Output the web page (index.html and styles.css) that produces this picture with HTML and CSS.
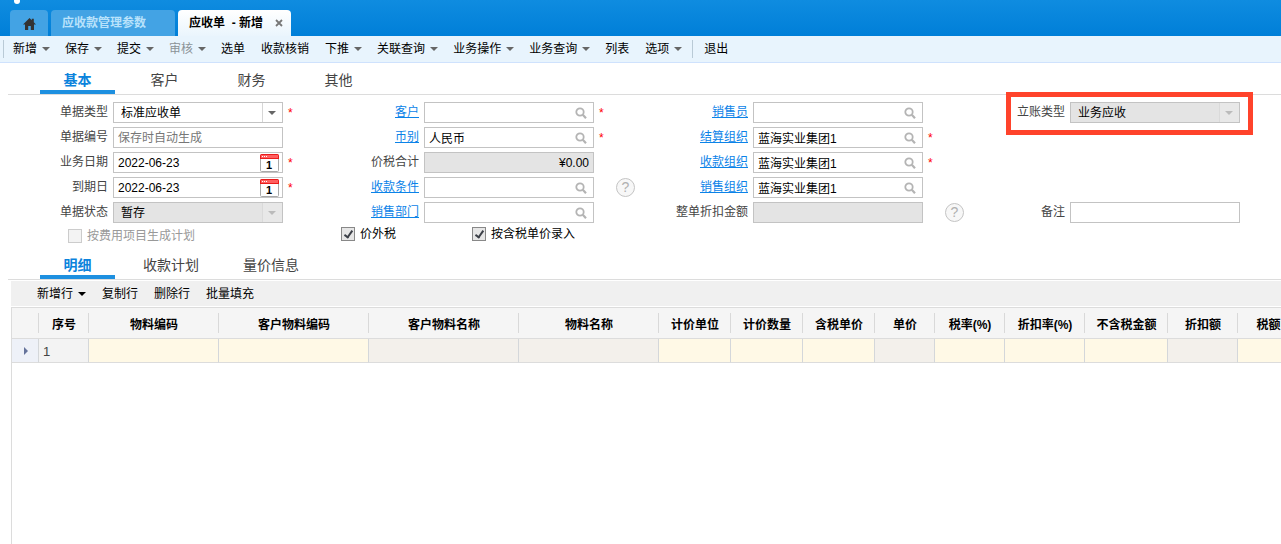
FILE: index.html
```html
<!DOCTYPE html>
<html lang="zh-CN">
<head>
  <meta charset="UTF-8">
  <meta name="viewport" content="width=device-width, initial-scale=1.0">
  <title>应收单 - 新增</title>
  <link rel="stylesheet" href="styles.css">
</head>
<body>
  <svg class="symbols" width="0" height="0" aria-hidden="true">
    <symbol id="icon-search" viewBox="0 0 12 12">
      <circle cx="5" cy="5" r="3.7" fill="none" stroke="#b4b4b4" stroke-width="1.8"/>
      <path d="M7.8 7.8 L11 11.2" stroke="#b4b4b4" stroke-width="2.2"/>
    </symbol>
    <symbol id="icon-calendar" viewBox="0 0 19 18">
      <path d="M.5 4 V16.5 Q.5 17.5 1.5 17.5 H17.5 Q18.5 17.5 18.5 16.5 V4" fill="#fff" stroke="#a9a9a9"/>
      <path d="M0 5 V1.5 Q0 0 1.5 0 H17.5 Q19 0 19 1.5 V5 Z" fill="#ea1c1c"/>
      <path d="M1 1 H18 V4 H1 Z" fill="#ff6060"/>
      <path d="M2 2 H3 V3 H2 Z M4 2 H5 V3 H4 Z M6 2 H7 V3 H6 Z" fill="#fff"/>
    </symbol>
  </svg>

  <header class="topbar">
    <span class="topbar-dot"></span>
    <nav class="page-tabs">
      <a href="#" class="page-tab home" aria-label="首页">
        <svg width="13" height="12" viewBox="0 0 13 12"><path d="M6.5 0 L8.8 2.3 V.8 H10.8 V4.2 L13 6.5 H11 V12 H7.8 V8 H5.2 V12 H2 V6.5 H0 Z" fill="#333"/></svg>
      </a>
      <a href="#" class="page-tab">应收款管理参数</a>
      <div class="page-tab active">
        <a href="#">应收单&nbsp; - 新增</a>
        <button class="tab-close" aria-label="关闭">
          <svg width="8" height="8" viewBox="0 0 8 8"><path d="M1 1 L7 7 M7 1 L1 7" stroke="#777" stroke-width="1.8"/></svg>
        </button>
      </div>
    </nav>
  </header>

  <div class="toolbar">
    <span class="sep first"></span>
    <button>新增<i class="caret"></i></button>
    <button>保存<i class="caret"></i></button>
    <button>提交<i class="caret"></i></button>
    <button class="muted">审核<i class="caret"></i></button>
    <button>选单</button>
    <button>收款核销</button>
    <button>下推<i class="caret"></i></button>
    <button>关联查询<i class="caret"></i></button>
    <button>业务操作<i class="caret"></i></button>
    <button>业务查询<i class="caret"></i></button>
    <button>列表</button>
    <button>选项<i class="caret"></i></button>
    <span class="sep"></span>
    <button>退出</button>
  </div>

  <nav class="section-tabs">
    <a href="#" class="active">基本</a>
    <a href="#">客户</a>
    <a href="#">财务</a>
    <a href="#">其他</a>
  </nav>

  <form class="bill-form">
    <div class="form-grid">
      <div class="form-col">
        <div class="field">
          <label for="billType">单据类型</label>
          <span class="control select"><select id="billType"><option>标准应收单</option></select></span>
          <span class="required">*</span>
        </div>
        <div class="field">
          <label for="billNo">单据编号</label>
          <span class="control"><input type="text" id="billNo" placeholder="保存时自动生成"></span>
        </div>
        <div class="field">
          <label for="bizDate">业务日期</label>
          <span class="control">
            <input type="text" id="bizDate" value="2022-06-23">
            <button type="button" class="date-btn" aria-label="选择日期"><svg width="19" height="18"><use href="#icon-calendar"/><text x="9" y="15" class="cal-day">1</text></svg></button>
          </span>
          <span class="required">*</span>
        </div>
        <div class="field">
          <label for="dueDate">到期日</label>
          <span class="control">
            <input type="text" id="dueDate" value="2022-06-23">
            <button type="button" class="date-btn" aria-label="选择日期"><svg width="19" height="18"><use href="#icon-calendar"/><text x="9" y="15" class="cal-day">1</text></svg></button>
          </span>
          <span class="required">*</span>
        </div>
        <div class="field">
          <label for="billStatus">单据状态</label>
          <span class="control select disabled"><select id="billStatus" disabled><option>暂存</option></select></span>
        </div>
      </div>

      <div class="form-col">
        <div class="field">
          <label for="customer"><a href="#">客户</a></label>
          <span class="control">
            <input type="text" id="customer">
            <button type="button" class="search-btn" aria-label="查找"><svg width="12" height="12"><use href="#icon-search"/></svg></button>
          </span>
          <span class="required">*</span>
        </div>
        <div class="field">
          <label for="currency"><a href="#">币别</a></label>
          <span class="control">
            <input type="text" id="currency" value="人民币">
            <button type="button" class="search-btn" aria-label="查找"><svg width="12" height="12"><use href="#icon-search"/></svg></button>
          </span>
          <span class="required">*</span>
        </div>
        <div class="field">
          <label for="total">价税合计</label>
          <span class="control disabled"><input type="text" id="total" class="amount" value="¥0.00" disabled></span>
        </div>
        <div class="field">
          <label for="payTerm"><a href="#">收款条件</a></label>
          <span class="control">
            <input type="text" id="payTerm">
            <button type="button" class="search-btn" aria-label="查找"><svg width="12" height="12"><use href="#icon-search"/></svg></button>
          </span>
          <button type="button" class="help">?</button>
        </div>
        <div class="field">
          <label for="saleDept"><a href="#">销售部门</a></label>
          <span class="control">
            <input type="text" id="saleDept">
            <button type="button" class="search-btn" aria-label="查找"><svg width="12" height="12"><use href="#icon-search"/></svg></button>
          </span>
        </div>
      </div>

      <div class="form-col">
        <div class="field">
          <label for="seller"><a href="#">销售员</a></label>
          <span class="control">
            <input type="text" id="seller">
            <button type="button" class="search-btn" aria-label="查找"><svg width="12" height="12"><use href="#icon-search"/></svg></button>
          </span>
        </div>
        <div class="field">
          <label for="settleOrg"><a href="#">结算组织</a></label>
          <span class="control">
            <input type="text" id="settleOrg" value="蓝海实业集团1">
            <button type="button" class="search-btn" aria-label="查找"><svg width="12" height="12"><use href="#icon-search"/></svg></button>
          </span>
          <span class="required">*</span>
        </div>
        <div class="field">
          <label for="payOrg"><a href="#">收款组织</a></label>
          <span class="control">
            <input type="text" id="payOrg" value="蓝海实业集团1">
            <button type="button" class="search-btn" aria-label="查找"><svg width="12" height="12"><use href="#icon-search"/></svg></button>
          </span>
          <span class="required">*</span>
        </div>
        <div class="field">
          <label for="saleOrg"><a href="#">销售组织</a></label>
          <span class="control">
            <input type="text" id="saleOrg" value="蓝海实业集团1">
            <button type="button" class="search-btn" aria-label="查找"><svg width="12" height="12"><use href="#icon-search"/></svg></button>
          </span>
        </div>
        <div class="field">
          <label for="discount">整单折扣金额</label>
          <span class="control disabled"><input type="text" id="discount" disabled></span>
          <button type="button" class="help">?</button>
        </div>
      </div>

      <div class="form-col ends">
        <div class="field marked">
          <label for="accountType">立账类型</label>
          <span class="control select disabled"><select id="accountType" disabled><option>业务应收</option></select></span>
        </div>
        <div class="field">
          <label for="remark">备注</label>
          <span class="control"><input type="text" id="remark"></span>
        </div>
      </div>
    </div>

    <div class="checks">
      <label class="check plan"><input type="checkbox" disabled>按费用项目生成计划</label>
      <label class="check"><input type="checkbox" checked>价外税</label>
      <label class="check"><input type="checkbox" checked>按含税单价录入</label>
    </div>
  </form>

  <nav class="section-tabs">
    <a href="#" class="active">明细</a>
    <a href="#">收款计划</a>
    <a href="#">量价信息</a>
  </nav>

  <section class="entry">
    <div class="entry-toolbar">
      <button>新增行<i class="caret"></i></button>
      <button>复制行</button>
      <button>删除行</button>
      <button>批量填充</button>
    </div>
    <div class="entry-grid">
      <table>
        <colgroup>
          <col class="w-mark"><col class="w-seq"><col class="w-code"><col class="w-name"><col class="w-name"><col class="w-item">
          <col class="w-qty"><col class="w-qty"><col class="w-qty"><col class="w-price"><col class="w-rate"><col class="w-drate">
          <col class="w-amount"><col class="w-rate"><col class="w-tax">
        </colgroup>
        <thead>
          <tr>
            <th></th><th>序号</th><th>物料编码</th><th>客户物料编码</th><th>客户物料名称</th><th>物料名称</th>
            <th>计价单位</th><th>计价数量</th><th>含税单价</th><th>单价</th><th>税率(%)</th><th>折扣率(%)</th>
            <th>不含税金额</th><th>折扣额</th><th>税额</th>
          </tr>
        </thead>
        <tbody>
          <tr>
            <td class="mark"><i class="row-arrow"></i></td><td class="seq">1</td><td></td><td></td><td class="locked"></td><td class="locked"></td>
            <td></td><td></td><td></td><td class="locked"></td><td></td><td></td>
            <td></td><td class="locked"></td><td></td>
          </tr>
        </tbody>
      </table>
    </div>
  </section>
</body>
</html>
```
FILE: styles.css
```css
*, *::before, *::after { box-sizing: border-box; }
html, body { height: 100%; }
body {
  margin: 0;
  display: flex;
  flex-direction: column;
  overflow: hidden;
  background: #fff;
  color: #000;
  font-family: "Liberation Sans", "Noto Sans CJK SC", sans-serif;
  font-size: 12px;
  line-height: 18px;
}
button, input, select { font: inherit; color: inherit; }
button {
  padding: 0;
  border: none;
  background: none;
  white-space: nowrap;
  cursor: pointer;
}
a { color: inherit; text-decoration: none; }
svg { display: block; }
.symbols { position: absolute; }

/* top bar */
.topbar {
  position: relative;
  flex: none;
  padding-top: 10px;
  background: linear-gradient(#0f8ce0, #007fd8);
}
.topbar-dot {
  position: absolute;
  top: -2px;
  left: 14px;
  width: 6px;
  height: 6px;
  border-radius: 50%;
  background: #fff;
}
.page-tabs { display: flex; gap: 3px; padding-left: 10px; }
.page-tab {
  display: flex;
  align-items: center;
  height: 26px;
  padding: 0 29px 0 11px;
  border-radius: 4px 4px 0 0;
  background: #43a3e4;
  color: #b9e2fb;
  font-weight: bold;
}
.page-tab.home { padding: 2px 12px 0 13px; }
.page-tab.active {
  gap: 12px;
  padding: 0 8px 0 11px;
  background: linear-gradient(#fff, #eaf5fd);
  color: #000;
}

/* menu bar */
.toolbar {
  display: flex;
  flex: none;
  align-items: center;
  gap: 16px;
  height: 27px;
  padding-left: 3px;
  border-bottom: 1px solid #cfe2fd;
  background: #e8f4fd;
}
.toolbar button, .entry-toolbar button { display: flex; align-items: center; gap: 5px; }
.toolbar .muted { color: #8b9297; }
.sep {
  width: 1px;
  height: 18px;
  margin: 0 -5px;
  background: #b9cad6;
}
.sep.first { margin: 0 -7px 0 0; }
.caret {
  border: solid transparent;
  border-width: 4px 4px 0;
  border-top-color: #666;
}
.toolbar .caret { margin-right: -1px; }

/* section tabs */
.section-tabs {
  display: flex;
  flex: none;
  gap: 12px;
  height: 32px;
  margin-left: 8px;
  padding-left: 32px;
  border-bottom: 1px solid #dcdcdc;
  color: #444;
  font-size: 14px;
  line-height: 34px;
  text-align: center;
}
.section-tabs a { min-width: 75px; height: 31px; padding: 0 16px; }
.section-tabs .active {
  border-bottom: 4px solid #1e90e0;
  color: #0b83dc;
  font-weight: bold;
}

/* bill header */
.bill-form { flex: none; padding: 7px 0 1px 35px; }
.form-grid { display: grid; grid-template-columns: 311fr 329fr 317fr 289fr; }
.form-col { display: flex; flex-direction: column; gap: 4px; }
.form-col.ends { justify-content: space-between; }
.field { display: flex; align-items: center; gap: 5px; height: 21px; }
.field label {
  flex: none;
  width: 73px;
  padding-bottom: 2px;
  color: #444;
  text-align: right;
}
.field label a { color: #0b83e8; text-decoration: underline; }
.control {
  position: relative;
  display: flex;
  align-items: center;
  flex: none;
  width: 170px;
  height: 21px;
  border: 1px solid #c3c3c3;
  background: #fff;
}
.control input, .control select {
  flex: 1;
  min-width: 0;
  height: 19px;
  padding: 0 4px;
  border: none;
  outline: none;
  background: transparent;
  opacity: 1;
}
.control input::placeholder { color: #777; }
.control .amount { text-align: right; }
.control select { padding: 0 24px 0 7px; appearance: none; }
.control.disabled { background: #e4e4e4; }
.control.select::before {
  content: "";
  position: absolute;
  top: 0;
  right: 0;
  width: 20px;
  height: 19px;
  border-left: 1px solid #d6d6d6;
  pointer-events: none;
}
.control.select::after {
  content: "";
  position: absolute;
  top: 8px;
  right: 6px;
  border: solid transparent;
  border-width: 4px 4px 0;
  border-top-color: #666;
  pointer-events: none;
}
.control.select.disabled::before { background: #e8e8e8; border-color: #dadada; }
.control.select.disabled::after { border-top-color: #bbb; }
.search-btn { padding: 1px 6px 0 0; }
.date-btn { padding-right: 3px; }
.cal-day { font-size: 11px; font-weight: bold; text-anchor: middle; }
.required { color: #f00; }
.help {
  width: 19px;
  height: 19px;
  margin-left: 17px;
  border: 1px solid #c4c4c4;
  border-radius: 50%;
  background: #f7f7f7;
  color: #b0b0b0;
  font-size: 14px;
  line-height: 17px;
}
.marked { position: relative; }
.marked::after {
  content: "";
  position: absolute;
  top: -10px;
  right: 28px;
  left: 14px;
  height: 43px;
  border: 5px solid #ff432b;
  pointer-events: none;
}
.checks { display: flex; margin-top: 2px; padding-left: 33px; }
.check { display: flex; align-items: center; gap: 5px; width: 131px; height: 18px; }
.check.plan { width: 273px; height: 22px; color: #999; }
.check input {
  display: grid;
  flex: none;
  place-content: center;
  width: 14px;
  height: 14px;
  margin: 0;
  border: 1px solid #888;
  background: #e6e6e6;
  appearance: none;
}
.check input:checked::before {
  content: "";
  width: 5px;
  height: 9px;
  margin-bottom: 2px;
  border: solid #3c4048;
  border-width: 0 2px 2px 0;
  transform: rotate(35deg);
}
.check input:disabled { border-color: #ccc; background: #f3f3f3; }

/* entry grid */
.entry {
  display: flex;
  flex: 1;
  flex-direction: column;
  min-height: 0;
  margin-left: 11px;
  padding-top: 1px;
}
.entry-toolbar {
  display: flex;
  align-items: center;
  gap: 16px;
  height: 25px;
  margin-bottom: 1px;
  padding-left: 26px;
  background: #f0f0f0;
}
.entry-toolbar .caret { border-top-color: #000; }
.entry-grid {
  flex: 1;
  overflow: hidden;
  border-top: 1px solid #dcdcdc;
  border-left: 1px solid #dcdcdc;
}
table {
  width: 1287px;
  border-collapse: separate;
  border-spacing: 0;
  table-layout: fixed;
}
.w-mark { width: 27px; }
.w-seq { width: 50px; }
.w-code { width: 130px; }
.w-name { width: 150px; }
.w-item { width: 140px; }
.w-qty { width: 72px; }
.w-price { width: 60px; }
.w-rate { width: 70px; }
.w-drate { width: 80px; }
.w-amount { width: 83px; }
.w-tax { width: 61px; }
th, td { padding: 0; border-bottom: 1px solid #dcdcdc; }
th {
  height: 31px;
  padding-top: 3px;
  background: #f5f5f5 linear-gradient(#d9d9d9, #d9d9d9) right center / 1px 20px no-repeat;
  white-space: nowrap;
}
td {
  height: 24px;
  border-right: 1px solid #d4d7da;
  background: #fff9e6;
}
td.locked { background: #f3f0eb; }
td.mark { background: #eef1f8; }
td.seq { padding: 2px 0 0 4px; background: #f3f3f3; color: #444; font-size: 13px; }
.row-arrow {
  display: block;
  width: 0;
  margin-left: 12px;
  border: solid transparent;
  border-width: 4px 0 4px 4px;
  border-left-color: #65739b;
}
```
